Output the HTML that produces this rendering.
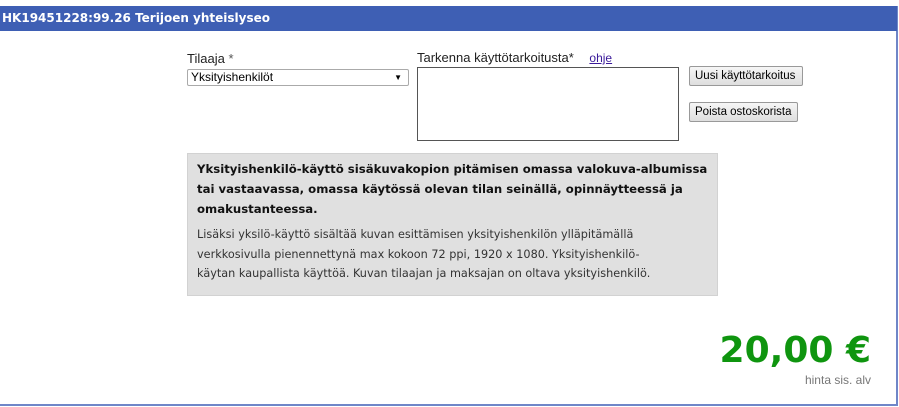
<!DOCTYPE html>
<html><head><meta charset="utf-8"><style>
body{margin:0;width:899px;height:407px;background:#fff;font-family:"DejaVu Sans",Verdana,sans-serif;position:relative;overflow:hidden}
.frame{position:absolute;left:0;top:6px;width:896px;height:398px;border-right:2px solid #6f86c8;border-bottom:2px solid #6f86c8}
.hdr{position:absolute;left:0;top:6px;width:897px;height:25px;background:#3e5fb4;color:#fff;font-weight:bold;font-size:12px;line-height:25px;padding-left:2px;box-sizing:border-box;white-space:nowrap}
.lbl{position:absolute;font-size:13px;color:#222;font-family:"Liberation Sans",Arial,sans-serif}
.sel{position:absolute;left:187px;top:69px;width:222px;height:17px;border:1px solid #aaa;border-radius:2px;box-sizing:border-box;font-family:"Liberation Sans",Arial,sans-serif;font-size:12px;line-height:15px;padding-left:3px;background:#fff}
.sel span{position:absolute;right:6px;top:0;font-size:8px}
.ta{position:absolute;left:417px;top:67px;width:262px;height:74px;border:1px solid #555;box-sizing:border-box;background:#fff}
.btn{position:absolute;left:689px;height:20px;border:1px solid #999;border-radius:2px;background:linear-gradient(#f6f6f6,#dedede);font-family:"Liberation Sans",Arial,sans-serif;font-size:11.5px;line-height:18px;padding:0 5px;box-sizing:border-box;white-space:nowrap}
.box{position:absolute;left:187px;top:153px;width:531px;height:143px;background:#e0e0e0;border:1px solid #d2d2d2;box-sizing:border-box;padding:5px 9px;white-space:nowrap}
.b{font-weight:bold;font-size:11.7px;line-height:20px;color:#111}
.n{font-size:11.25px;line-height:19.5px;color:#333;margin-top:6px}
.price{position:absolute;right:28px;top:329px;color:#0f950f;font-weight:bold;font-size:36px;line-height:44px}
.alv{position:absolute;right:28px;top:373px;color:#777;font-family:"Liberation Sans",Arial,sans-serif;font-size:12px}
</style></head><body>
<div class="frame"></div>
<div class="hdr">HK19451228:99.26 Terijoen yhteislyseo</div>
<div class="lbl" style="left:187px;top:51px">Tilaaja <span style="color:#555">*</span></div>
<div class="sel">Yksityishenkilöt<span>▼</span></div>
<div class="lbl" style="left:417px;top:50px">Tarkenna käyttötarkoitusta* <a style="margin-left:12px;color:#3a1a9a;text-decoration:underline;font-size:12px">ohje</a></div>
<div class="ta"></div>
<div class="btn" style="top:66px;width:114px">Uusi käyttötarkoitus</div>
<div class="btn" style="top:102px;width:109px">Poista ostoskorista</div>
<div class="box">
<div class="b">Yksityishenkilö-käyttö sisäkuvakopion pitämisen omassa valokuva-albumissa<br>tai vastaavassa, omassa käytössä olevan tilan seinällä, opinnäytteessä ja<br>omakustanteessa.</div>
<div class="n">Lisäksi yksilö-käyttö sisältää kuvan esittämisen yksityishenkilön ylläpitämällä<br>verkkosivulla pienennettynä max kokoon 72 ppi, 1920 x 1080. Yksityishenkilö-<br>käytan kaupallista käyttöä. Kuvan tilaajan ja maksajan on oltava yksityishenkilö.</div>
</div>
<div class="price">20,00 €</div>
<div class="alv">hinta sis. alv</div>
</body></html>
